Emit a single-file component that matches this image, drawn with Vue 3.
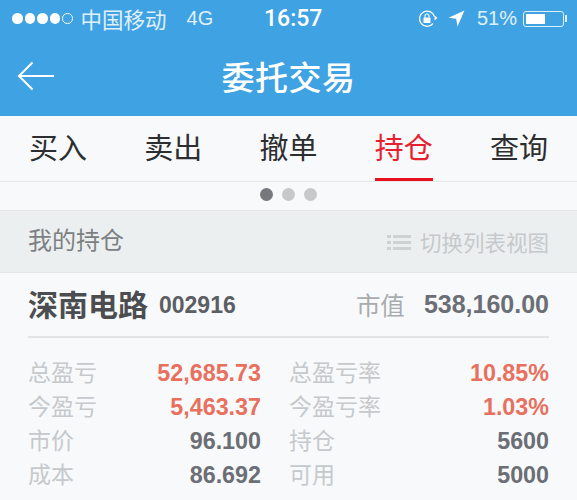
<template>
  <div class="page">
    <header class="header">
      <div class="status">
        <div class="status-left">
          <span class="signal">
            <i v-for="n in 4" :key="n" class="dot"></i>
            <i class="dot hollow"></i>
          </span>
          <span class="carrier">中国移动</span>
          <span class="net">4G</span>
        </div>
        <div class="clock">16:57</div>
        <div class="status-right">
          <svg class="lock" width="22" height="20" viewBox="0 0 22 20" fill="none">
            <path d="M16 14.500a7.600 7.600 0 1 1 1.400-7" stroke="#fff" stroke-width="1.200" />
            <path d="M16.500 7.500h5l-2.500 3z" fill="#fff" transform="rotate(-90 19 9)" />
            <rect x="6.500" y="8.500" width="7" height="5.600" rx="0.600" fill="#fff" />
            <path d="M8 8.500V7a2 2 0 0 1 4 0v1.500" stroke="#fff" stroke-width="1.100" />
          </svg>
          <svg class="arrow" width="17" height="17" viewBox="0 0 16 16">
            <path d="M15.500 0.500 0.500 7.300l7.200 0.900 1.200 7.300z" fill="#fff" />
          </svg>
          <span class="percent">51%</span>
          <span class="battery"><span class="level" :style="{ width: batteryLevel + '%' }"></span></span>
          <span class="nub"></span>
        </div>
      </div>
      <div class="titlebar">
        <svg class="back" width="40" height="32" viewBox="0 0 40 32" fill="none">
          <path d="M16.500 2.500 3 16l13.500 13.500M3 16h35" stroke="#fff" stroke-width="2" />
        </svg>
        <h1 class="title">委托交易</h1>
      </div>
    </header>

    <nav class="tabs">
      <div v-for="tab in tabs" :key="tab" class="tab" :class="{ active: tab === activeTab }">{{ tab }}</div>
    </nav>

    <div class="pager">
      <i class="page-dot current"></i>
      <i class="page-dot"></i>
      <i class="page-dot"></i>
    </div>

    <div class="section">
      <span class="section-title">我的持仓</span>
      <span class="switch">
        <svg width="24" height="16" viewBox="0 0 24 16" fill="#cfd2d3">
          <rect x="0" y="1" width="4" height="3" />
          <rect x="6" y="1" width="18" height="3" />
          <rect x="0" y="7" width="4" height="3" />
          <rect x="6" y="7" width="18" height="3" />
          <rect x="0" y="13" width="4" height="3" />
          <rect x="6" y="13" width="18" height="3" />
        </svg>
        切换列表视图
      </span>
    </div>

    <section class="card">
      <div class="stock">
        <span class="name">深南电路</span>
        <span class="code">002916</span>
        <span class="mv-label">市值</span>
        <span class="mv-value">538,160.00</span>
      </div>
      <div class="grid">
        <div v-for="item in rows" :key="item.label" class="cell">
          <span class="label">{{ item.label }}</span>
          <span class="value" :class="{ up: item.up }">{{ item.value }}</span>
        </div>
      </div>
    </section>
  </div>
</template>

<script setup>
const batteryLevel = 54
const activeTab = '持仓'
const tabs = ['买入', '卖出', '撤单', '持仓', '查询']

const rows = [
  { label: '总盈亏', value: '52,685.73', up: true },
  { label: '总盈亏率', value: '10.85%', up: true },
  { label: '今盈亏', value: '5,463.37', up: true },
  { label: '今盈亏率', value: '1.03%', up: true },
  { label: '市价', value: '96.100' },
  { label: '持仓', value: '5600' },
  { label: '成本', value: '86.692' },
  { label: '可用', value: '5000' }
]
</script>

<style>
html,
body {
  margin: 0;
  background: #f8f9fa;
}
</style>

<style scoped>
.page {
  width: 577px;
  height: 500px;
  overflow: hidden;
  background: #f8f9fa;
  font-family: "Liberation Sans", "Noto Sans CJK SC", sans-serif;
}

.header {
  height: 116px;
  background: #3fa2e3;
  color: #fff;
}

.status {
  height: 37px;
  display: flex;
  align-items: center;
  position: relative;
  padding: 0 10px 0 12px;
  font-size: 20px;
  color: #e0f0fb;
}

.status-left {
  display: flex;
  align-items: center;
}

.signal {
  display: flex;
  gap: 2px;
  margin-right: 8px;
}

.dot {
  width: 10.5px;
  height: 10.5px;
  border-radius: 50%;
  background: #fff;
  box-sizing: border-box;
}

.dot.hollow {
  background: none;
  border: 1px solid #fff;
}

.carrier {
  font-size: 21.5px;
}

.net {
  margin-left: 20px;
}

.clock {
  position: absolute;
  left: 264px;
  font-family: Roboto, "Liberation Sans", sans-serif;
  font-size: 23px;
  font-weight: 500;
  color: #fff;
}

.status-right {
  margin-left: auto;
  display: flex;
  align-items: center;
}

.arrow {
  margin-left: 9px;
}

.percent {
  margin-left: 12px;
}

.battery {
  width: 41px;
  height: 16px;
  margin-left: 6px;
  padding: 2px;
  box-sizing: border-box;
  border: 1px solid #e0f0fb;
  border-radius: 3px;
}

.level {
  display: block;
  height: 100%;
  background: #fff;
}

.nub {
  width: 2px;
  height: 7px;
  margin-left: 1px;
  background: #e0f0fb;
}

.titlebar {
  height: 79px;
  margin-top: -1px;
  position: relative;
  display: flex;
  align-items: center;
  justify-content: center;
}

.back {
  position: absolute;
  left: 16px;
  top: 24px;
}

.title {
  margin: 0;
  font-size: 33px;
  font-weight: 500;
  letter-spacing: 0.5px;
}

.tabs {
  height: 65px;
  display: flex;
  justify-content: space-between;
  padding: 0 29px 0 29px;
  border-bottom: 1px solid #e6e8e9;
}

.tab {
  width: 58px;
  height: 62px;
  line-height: 66px;
  font-size: 29px;
  text-align: center;
  color: #2c2e30;
  white-space: nowrap;
}

.tab.active {
  color: #e8202e;
  border-bottom: 3px solid #e8101f;
}

.pager {
  height: 29px;
  box-sizing: border-box;
  padding-bottom: 4px;
  display: flex;
  align-items: center;
  justify-content: center;
  gap: 9px;
  border-bottom: 1px solid #e2e6e6;
}

.page-dot {
  width: 13px;
  height: 13px;
  border-radius: 50%;
  background: #c6c8ca;
}

.page-dot.current {
  background: #77787e;
}

.section {
  height: 61px;
  display: flex;
  align-items: center;
  justify-content: space-between;
  padding: 0 28px;
  background: #eceff0;
  border-bottom: 1px solid #e2e6e6;
}

.section-title {
  font-size: 24px;
  color: #7d8083;
  position: relative;
  top: -3px;
}

.switch {
  display: flex;
  align-items: center;
  gap: 9px;
  font-size: 21.500px;
  color: #c6c9cb;
}

.card {
  padding: 0 28px;
}

.stock {
  height: 63px;
  display: flex;
  align-items: center;
  border-bottom: 2px solid #e2e5e6;
}

.name {
  font-size: 30px;
  font-weight: 700;
  color: #4b4d50;
  margin-top: -4px;
}

.code {
  margin-left: 11px;
  font-size: 23px;
  font-weight: 700;
  color: #5b5e62;
  margin-top: 2px;
}

.mv-label {
  margin-left: auto;
  font-size: 24.500px;
  color: #a9acaf;
}

.mv-value {
  margin-left: 19px;
  font-size: 25px;
  font-weight: 700;
  color: #6b6f75;
}

.grid {
  display: grid;
  grid-template-columns: 233px 260px;
  column-gap: 28px;
  padding-top: 16px;
}

.cell {
  height: 34px;
  display: flex;
  align-items: center;
  justify-content: space-between;
}

.label {
  font-size: 23px;
  color: #c6c9cc;
}

.value {
  margin-top: 4px;
  font-size: 23.300px;
  font-weight: 700;
  color: #6b6f75;
}

.value.up {
  color: #e8705f;
}
</style>
